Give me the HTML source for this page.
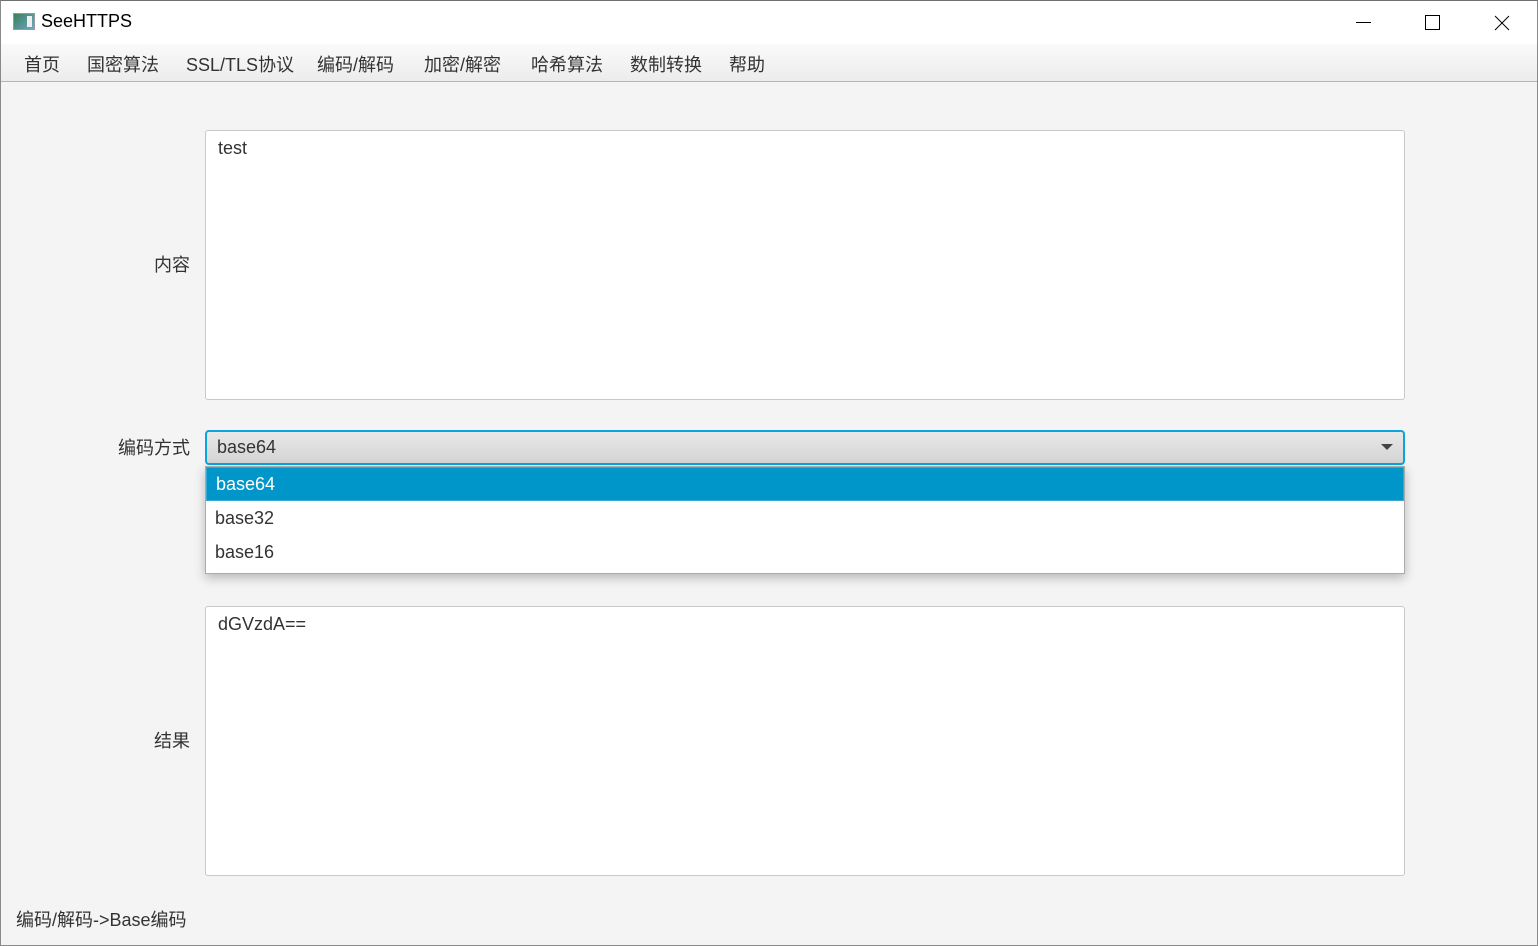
<!DOCTYPE html>
<html><head><meta charset="utf-8"><style>
*{margin:0;padding:0;box-sizing:border-box}
body{width:1538px;height:946px;overflow:hidden;background:#f4f4f4;font-family:"Liberation Sans","Noto Sans CJK SC",sans-serif;color:#333;position:relative}
.win{position:absolute;inset:0;border:1px solid #8a8a8a;border-top:1px solid #6f6f6f}
.title{position:absolute;left:0;top:0;width:1538px;height:44px;background:#fff}
.title .t{position:absolute;left:41px;top:11px;font-size:18px;color:#000}
.icon{position:absolute;left:13px;top:13px;width:22px;height:17px;border:1px solid #999;background:linear-gradient(135deg,#3b7f5a,#6fa7c9);}
.icon:after{content:"";position:absolute;right:2px;top:2px;width:5px;height:11px;background:#eee}
.menu{position:absolute;left:0;top:44px;width:1538px;height:38px;background:linear-gradient(#fafafa,#ececec);border-bottom:1px solid #b5b5b5}
.menu span{position:absolute;top:7px;font-size:18px;color:#333}
.box{position:absolute;background:#fff;border:1px solid #c9c9c9;border-radius:3px;font-size:18px;color:#333;padding:7px 12px}
.lbl{position:absolute;font-size:18px;color:#333;text-align:right;width:100px}
.combo{position:absolute;left:205px;top:430px;width:1200px;height:35px;border:2px solid #0ba4e0;border-radius:4px;background:linear-gradient(#e8e8e8,#d4d4d4);font-size:18px;padding:5px 10px}
.arrow{position:absolute;right:10px;top:12px;width:0;height:0;border-left:6px solid transparent;border-right:6px solid transparent;border-top:6px solid #444}
.list{position:absolute;left:205px;top:466px;width:1200px;height:108px;background:#fff;border:1px solid #aaa;box-shadow:0 4px 10px rgba(0,0,0,.25)}
.list div{height:34px;font-size:18px;padding:7px 9px 0}
.list div.sel{padding-top:6px}
.sel{background:#0096c9;color:#fff;border:1px solid #38a9d6}
</style></head><body>
<div class="title"><div class="icon"></div><div class="t">SeeHTTPS</div>
<svg style="position:absolute;left:1350px;top:10px" width="180" height="26">
<line x1="6" y1="12.5" x2="21" y2="12.5" stroke="#000" stroke-width="1"/>
<rect x="75.5" y="5.5" width="14" height="14" fill="none" stroke="#000"/>
<line x1="145" y1="6" x2="159" y2="20" stroke="#000"/><line x1="159" y1="6" x2="145" y2="20" stroke="#000"/>
</svg></div>
<div class="menu">
<span style="left:24px">首页</span><span style="left:87px">国密算法</span><span style="left:186px">SSL/TLS协议</span><span style="left:317px">编码/解码</span><span style="left:424px">加密/解密</span><span style="left:531px">哈希算法</span><span style="left:630px">数制转换</span><span style="left:729px">帮助</span>
</div>
<div class="lbl" style="left:90px;top:251px">内容</div>
<div class="box" style="left:205px;top:130px;width:1200px;height:270px">test</div>
<div class="lbl" style="left:90px;top:434px">编码方式</div>
<div class="combo">base64<div class="arrow"></div></div>
<div class="list"><div class="sel">base64</div><div>base32</div><div>base16</div></div>
<div class="lbl" style="left:90px;top:727px">结果</div>
<div class="box" style="left:205px;top:606px;width:1200px;height:270px">dGVzdA==</div>
<div style="position:absolute;left:16px;top:906px;font-size:18px">编码/解码-&gt;Base编码</div>
<div class="win"></div>
</body></html>
